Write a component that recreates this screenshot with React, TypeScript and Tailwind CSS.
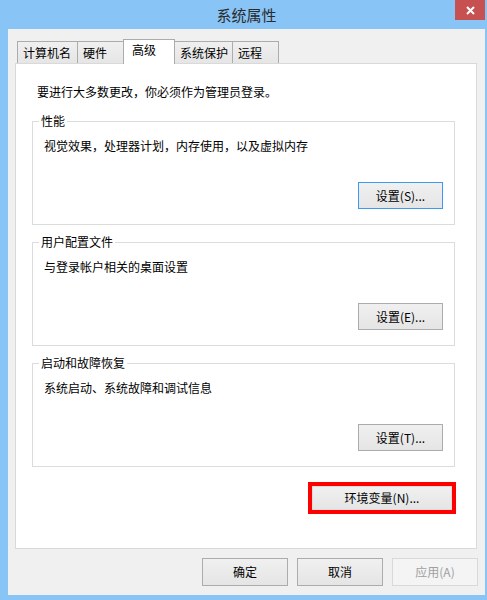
const font = { fontFamily: '"Noto Sans CJK SC", "Microsoft YaHei", sans-serif' };

const tabs = [
  { label: "计算机名", w: "w-[61px]" },
  { label: "硬件", w: "w-[47px]" },
  { label: "高级", w: "w-[52px]", active: true },
  { label: "系统保护", w: "w-[59px]" },
  { label: "远程", w: "w-[47px]" },
];

function Btn({ children, focus, disabled, className = "" }: { children: React.ReactNode; focus?: boolean; disabled?: boolean; className?: string }) {
  return (
    <button
      disabled={disabled}
      className={
        "flex items-center justify-center border bg-linear-to-b text-[12px] leading-[16px] " +
        (disabled
          ? "border-[#d9d9d9] from-[#f4f4f4] to-[#f4f4f4] text-[#a0a0a0] "
          : focus
          ? "border-[#3c9af0] from-[#f0f0f0] to-[#e5e5e5] text-black "
          : "border-[#acacac] from-[#f0f0f0] to-[#e5e5e5] text-black ") +
        className
      }
    >
      {children}
    </button>
  );
}

function Group({ title, desc, button, focus }: { title: string; desc: string; button: string; focus?: boolean }) {
  return (
    <div className="relative flex h-[104px] flex-col justify-between border border-[#dcdcdc] pb-[15px] pl-[11px] pr-[11px] pt-[16px]">
      <span className="absolute -top-[9px] left-[6px] bg-white px-[2px] text-[12px] leading-[16px] text-black">{title}</span>
      <div className="text-[12px] leading-[16px] text-black">{desc}</div>
      <Btn focus={focus} className="h-[27px] w-[85px] self-end">{button}</Btn>
    </div>
  );
}

export default function App() {
  return (
    <div className="flex h-[600px] w-[487px] flex-col overflow-hidden bg-[#88c4f6]" style={font}>
      {/* title bar */}
      <div className="relative ml-[8px] mr-[2px] flex h-[29px] shrink-0 items-center justify-center">
        <span className="text-[15px] leading-[20px] text-[#2b2b2b]">系统属性</span>
        <div className="absolute right-0 top-0 flex h-[20px] w-[30px] items-center justify-center bg-[#c75050]">
          <svg width="9" height="9" viewBox="0 0 9 9">
            <path d="M1 1 L8 8 M8 1 L1 8" stroke="#fff" strokeWidth="2" />
          </svg>
        </div>
      </div>

      {/* dialog body */}
      <div className="mb-[5px] ml-[8px] mr-[2px] flex flex-1 flex-col bg-[#f0f0f0] px-[7px]">
        <div className="ml-[2px] mt-[10px] flex h-[24px] items-end">
          {tabs.map((t, i) =>
            t.active ? (
              <div
                key={t.label}
                className={`relative z-10 -mb-px ${i > 0 ? "-ml-px" : ""} ${t.w} h-[25px] border border-b-0 border-[#acacac] bg-white pl-[8px] pt-[2px] text-[12px] leading-[16px] text-black`}
              >
                {t.label}
              </div>
            ) : (
              <div
                key={t.label}
                className={`${i > 0 ? "-ml-px" : ""} ${t.w} h-[22px] border border-b-0 border-[#acacac] bg-linear-to-b from-[#f0f0f0] to-[#e5e5e5] pl-[5px] pt-[3px] text-[12px] leading-[16px] text-black`}
              >
                {t.label}
              </div>
            )
          )}
        </div>

        <div className="flex h-[486px] w-[462px] flex-col border border-[#d9d9d9] bg-white pl-[16px] pr-[21px] pt-[20px]">
          <div className="ml-[5px] text-[12px] leading-[16px] text-black">要进行大多数更改，你必须作为管理员登录。</div>
          <div className="mt-[21px]">
            <Group title="性能" desc="视觉效果，处理器计划，内存使用，以及虚拟内存" button="设置(S)..." focus />
          </div>
          <div className="mt-[17px]">
            <Group title="用户配置文件" desc="与登录帐户相关的桌面设置" button="设置(E)..." />
          </div>
          <div className="mt-[17px]">
            <Group title="启动和故障恢复" desc="系统启动、系统故障和调试信息" button="设置(T)..." />
          </div>
          <div className="-mr-px mt-[15px] self-end border-[4px] border-[#ff0000]">
            <Btn className="h-[24px] w-[140px] border-[#dcdcdc]">环境变量(N)...</Btn>
          </div>
        </div>

        <div className="mt-[9px] flex justify-end gap-[9px]">
          <Btn className="h-[28px] w-[86px]">确定</Btn>
          <Btn className="h-[28px] w-[86px]">取消</Btn>
          <Btn disabled className="h-[28px] w-[86px]">应用(A)</Btn>
        </div>
      </div>
    </div>
  );
}
